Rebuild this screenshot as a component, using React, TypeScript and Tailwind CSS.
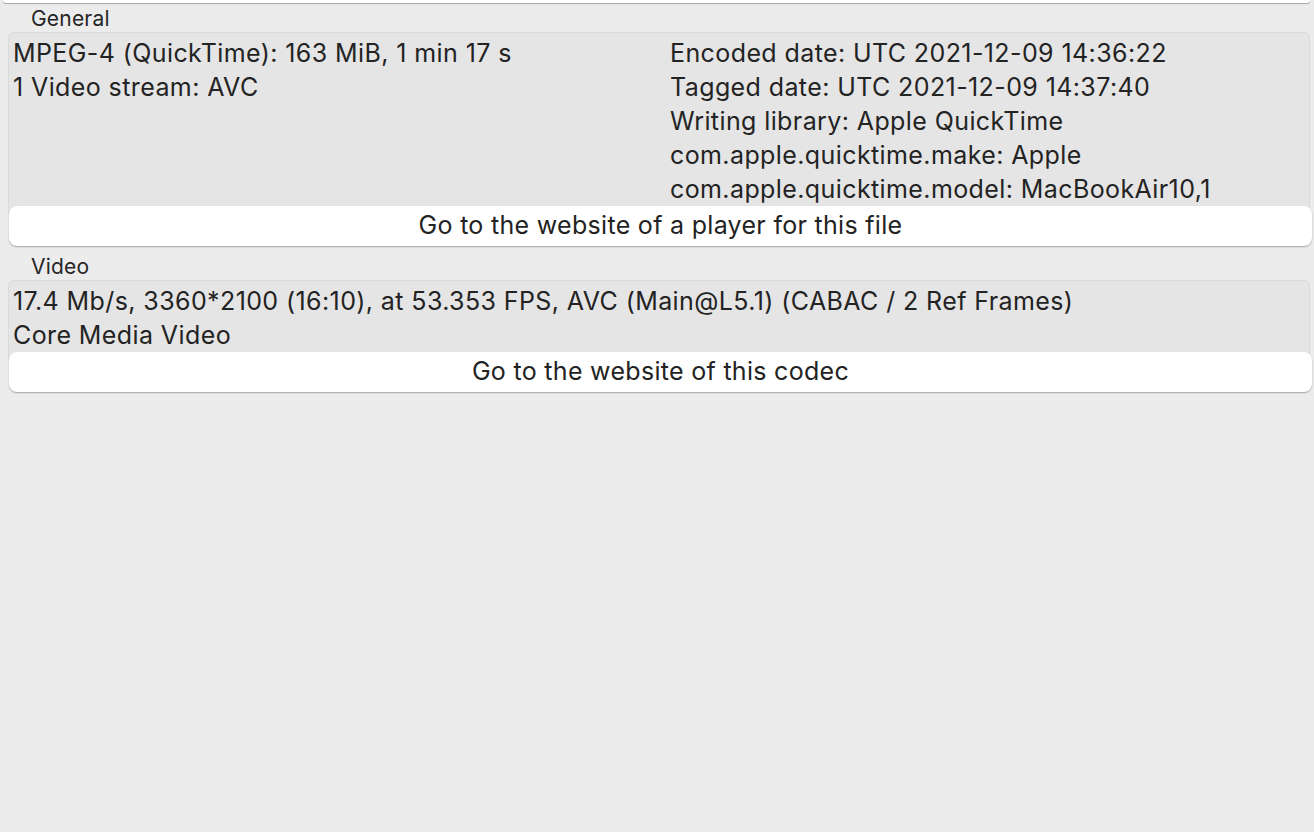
import React from "react";

const font = { fontFamily: "Inter, 'Noto Sans', sans-serif" };

function Section({
  label,
  left,
  right,
  button,
}: {
  label: string;
  left: string[];
  right?: string[];
  button: string;
}) {
  return (
    <div className="flex flex-col">
      <div className="h-[32px] pl-[31px] pt-[6px] text-[21px] leading-[26px] tracking-[0.2px] text-[#262626]">{label}</div>
      <div className="ml-[8px] mr-[4px] rounded-[6px] border border-[#dadada] bg-[#e5e5e5] pt-[3px] pb-[10px] pl-[4px]">
        <div className="flex text-[25px] leading-[34px] tracking-[0.4px] text-[#232323]">
          <div className="w-[657px] shrink-0">
            {left.map((l) => (
              <div key={l} className="whitespace-nowrap">{l}</div>
            ))}
          </div>
          {right && (
            <div>
              {right.map((l) => (
                <div key={l} className="whitespace-nowrap">{l}</div>
              ))}
            </div>
          )}
        </div>
      </div>
      <div className="-mt-[11px] ml-[9px] mr-[2px] flex h-[40px] items-center justify-center rounded-[8px] bg-white text-[25px] tracking-[0.3px] text-[#232323] shadow-[0_1px_1.5px_rgba(0,0,0,0.3)]">
        {button}
      </div>
    </div>
  );
}

export default function App() {
  return (
    <div className="h-[832px] w-[1314px] overflow-hidden bg-[#ececec]" style={font}>
      <div className="ml-[3px] mr-[4px] h-[3px] rounded-b-[6px] bg-white shadow-[0_1px_1px_rgba(0,0,0,0.3)]" />
      <div className="-mt-[3px]">
        <Section
          label="General"
          left={["MPEG-4 (QuickTime): 163 MiB, 1 min 17 s", "1 Video stream: AVC"]}
          right={[
            "Encoded date: UTC 2021-12-09 14:36:22",
            "Tagged date: UTC 2021-12-09 14:37:40",
            "Writing library: Apple QuickTime",
            "com.apple.quicktime.make: Apple",
            "com.apple.quicktime.model: MacBookAir10,1",
          ]}
          button="Go to the website of a player for this file"
        />
        <div className="h-[2px]" />
        <Section
          label="Video"
          left={[
            "17.4 Mb/s, 3360*2100 (16:10), at 53.353 FPS, AVC (Main@L5.1) (CABAC / 2 Ref Frames)",
            "Core Media Video",
          ]}
          button="Go to the website of this codec"
        />
      </div>
    </div>
  );
}
